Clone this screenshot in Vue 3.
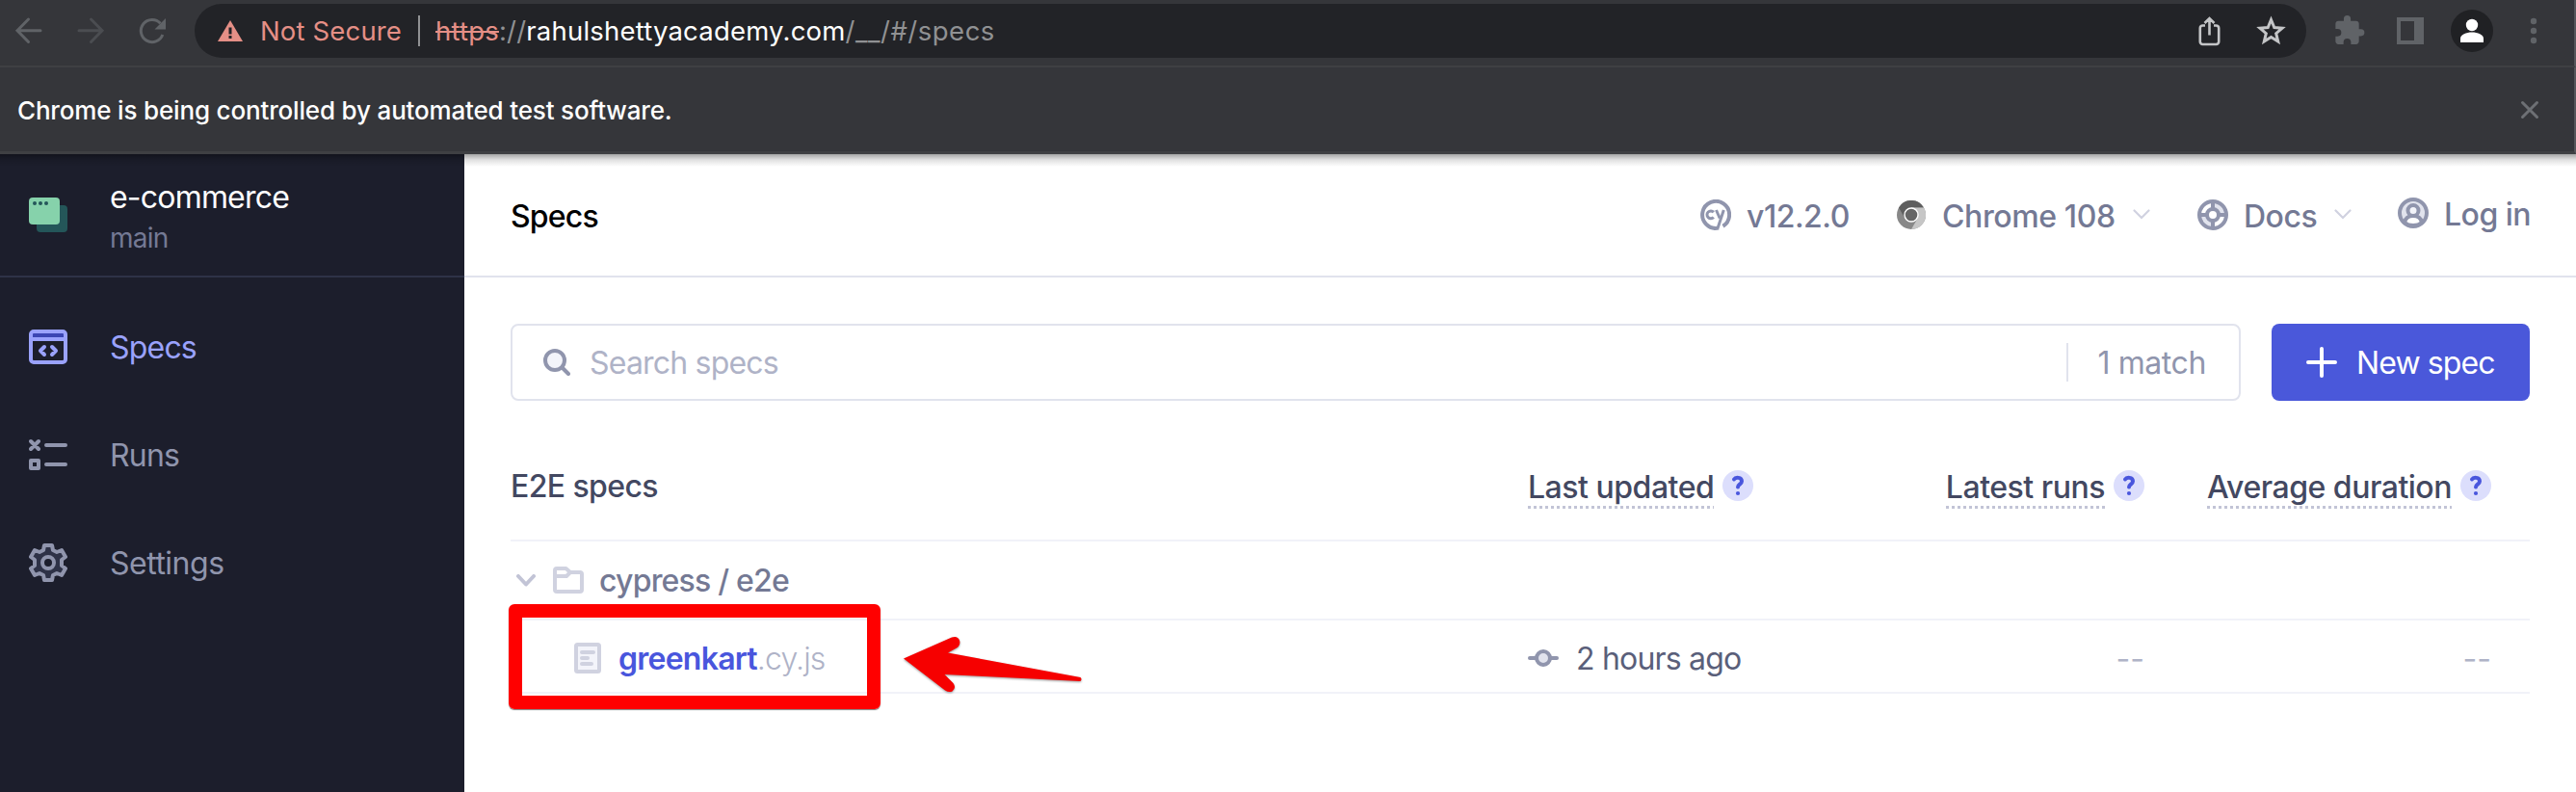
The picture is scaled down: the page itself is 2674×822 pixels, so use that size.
<script setup>
const nav = [
  { id: 'specs', label: 'Specs' },
  { id: 'runs', label: 'Runs' },
  { id: 'settings', label: 'Settings' },
]
const columns = [
  { label: 'Last updated', cls: 'updated' },
  { label: 'Latest runs', cls: 'end' },
  { label: 'Average duration', cls: 'end' },
]
</script>

<template>
  <div class="window">
    <div class="toolbar">
      <svg class="nav-icons" width="202" height="68" viewBox="0 0 202 68" fill="none" stroke="#606367" stroke-width="3">
        <path d="M42 31.7H18.5M29.5 20 18 31.7 29.5 43.5" stroke-linecap="round" />
        <path d="M82 31.7h23.5M94.500 20 106 31.700 94.500 43.500" stroke="#4b4d51" stroke-linecap="round" />
        <path d="M168.800 36A11.600 11.600 0 1 1 166.500 24.200" />
        <path d="M172 19v11.500h-11.500z" fill="#606367" stroke="none" />
      </svg>
      <div class="omnibox">
        <svg class="warn" width="26" height="22" viewBox="0 0 26 22"><path d="M13 0 26 22H0z" fill="#e58f86" /><path d="M11.500 7.500h3v7h-3zM11.500 16h3v3h-3z" fill="#222327" /></svg>
        <span class="not-secure">Not Secure</span>
        <i class="divider"></i>
        <span class="url"><s>https</s><span class="scheme">://</span><b>rahulshettyacademy.com</b><span class="path">/__/#/specs</span></span>
        <svg class="omni-icons" width="92" height="34" viewBox="0 0 92 34" fill="none" stroke="#c4c5c7" stroke-width="2.600">
          <path d="M8 11.500H5.500A2.700 2.700 0 0 0 2.800 14.200v14A2.700 2.700 0 0 0 5.500 31h14a2.700 2.700 0 0 0 2.700-2.800v-14a2.700 2.700 0 0 0-2.700-2.700H17M12.500 21.500V4.500M7.500 9l5-5 5 5" />
          <path d="M76.500 5.500l3.300 8 8.300.7-6.400 5.500 2 8.300-7.200-4.500-7.200 4.500 2-8.300-6.400-5.500 8.300-.7z" stroke-width="3" />
        </svg>
      </div>
      <svg class="ext-icons" width="278" height="68" viewBox="2394 0 278 68">
        <path transform="translate(2421.500 14.500) scale(1.430)" fill="#606367" d="M20.500 11H19V7c0-1.100-.9-2-2-2h-4V3.500a2.500 2.500 0 0 0-5 0V5H4c-1.100 0-1.990.9-1.990 2v3.800H3.500a2.700 2.700 0 0 1 0 5.400H2V20c0 1.100.9 2 2 2h3.800v-1.500a2.700 2.700 0 0 1 5.400 0V22H17c1.100 0 2-.9 2-2v-4h1.500a2.500 2.500 0 0 0 0-5z" />
        <path d="M2488 18h28v28h-28zM2492 22v20h14V22z" fill="#606367" fill-rule="evenodd" />
        <circle cx="2566" cy="32" r="22" fill="#202124" />
        <circle cx="2566" cy="26" r="6.200" fill="#fff" />
        <path d="M2554 44v-4c0-4 6-6.500 12-6.500s12 2.500 12 6.500v4z" fill="#fff" />
        <g fill="#606367"><circle cx="2630" cy="22" r="3.200" /><circle cx="2630" cy="32" r="3.200" /><circle cx="2630" cy="42" r="3.200" /></g>
      </svg>
    </div>

    <div class="infobar">
      <span>Chrome is being controlled by automated test software.</span>
      <svg width="20" height="20" viewBox="0 0 20 20" stroke="#6d7074" stroke-width="3" stroke-linecap="round"><path d="M2.500 2.500l15 15M17.500 2.500l-15 15" /></svg>
    </div>

    <div class="app">
      <aside>
        <div class="project">
          <svg width="40" height="36" viewBox="0 0 40 36">
            <rect x="8" y="8" width="32" height="28" rx="4" fill="#245659" />
            <rect width="32" height="28" rx="4" fill="#86d2ab" />
            <g fill="#245659"><circle cx="6" cy="6" r="2" /><circle cx="12" cy="6" r="2" /><circle cx="18" cy="6" r="2" /></g>
          </svg>
          <div class="names"><span class="name">e-commerce</span><span class="branch">main</span></div>
        </div>
        <nav>
          <a v-for="n in nav" :key="n.id" :class="n.id">
            <svg v-if="n.id === 'specs'" width="40" height="40" viewBox="0 0 40 40" fill="none" stroke="#9aa2fc" stroke-width="4" stroke-linecap="round" stroke-linejoin="round">
              <rect x="4" y="6" width="32" height="5" fill="#3b46b4" stroke="none" />
              <rect x="2" y="4" width="36" height="32" rx="3" /><path d="M3 12h34" stroke-linecap="butt" />
              <path d="M16 20l-4 4 4 4M24 20l4 4-4 4" />
            </svg>
            <svg v-else-if="n.id === 'runs'" width="40" height="40" viewBox="0 0 40 40" fill="none" stroke="#9095ad" stroke-width="4" stroke-linecap="round" stroke-linejoin="round">
              <path d="M2 6l8 8M10 6l-8 8M18 10h20M18 30h20M2 26h8v8H2z" />
            </svg>
            <svg v-else width="40" height="40" viewBox="-20 -20 40 40" fill="#2e3247" stroke="#9095ad" stroke-width="4" stroke-linejoin="round">
              <path d="M-4-18H4L5-13 9-11 14-13 18-6 14-3V3L18 6 14 13 9 11 5 13 4 18H-4L-5 13-9 11-14 13-18 6-14 3V-3L-18-6-14-13-9-11-5-13Z" />
              <circle r="6" fill="#1c1e2c" />
            </svg>
            <span>{{ n.label }}</span>
          </a>
        </nav>
      </aside>

      <main>
        <header>
          <h1>Specs</h1>
          <div class="item version">
            <svg width="32" height="32" viewBox="0 0 32 32" fill="none" stroke="#9095ad">
              <path d="M19 29.600A14 14 0 1 1 23.500 27.800" stroke-width="4" />
              <path d="M13.800 13.200a3.900 3.900 0 1 0 0 5.200M16.500 11l3.700 8.500M24.300 11l-6.300 19" stroke-width="3" />
            </svg>
            <span>v12.2.0</span>
          </div>
          <div class="item browser">
            <svg width="30" height="30" viewBox="0 0 30 30">
              <circle cx="15" cy="15" r="15" fill="#888" />
              <path d="M2 7.500A15 15 0 0 1 28 7.500H15L8.500 18.800z" fill="#5e5e5e" />
              <path d="M28 7.500A15 15 0 0 1 15 30l6.500-11.200L15 7.500z" fill="#c6c6c6" />
              <circle cx="15" cy="15" r="7" fill="#666" stroke="#fff" stroke-width="1.400" />
            </svg>
            <span>Chrome 108</span>
            <svg class="caret" width="18" height="12" viewBox="0 0 18 12" fill="none" stroke="#d0d2e0" stroke-width="2.200" stroke-linecap="round"><path d="M1.500 1.500 9 9l7.500-7.500" /></svg>
          </div>
          <div class="item docs">
            <svg width="32" height="32" viewBox="0 0 32 32" fill="none" stroke="#9095ad" stroke-width="4">
              <path d="M16 2a14 14 0 0 1 14 14H16zM16 30A14 14 0 0 1 2 16h14z" fill="#e1e3ed" stroke="none" />
              <circle cx="16" cy="16" r="14" /><circle cx="16" cy="16" r="6" fill="#fff" /><path d="M16 2v8M16 22v8M2 16h8M22 16h8" />
            </svg>
            <span>Docs</span>
            <svg class="caret" width="18" height="12" viewBox="0 0 18 12" fill="none" stroke="#d0d2e0" stroke-width="2.200" stroke-linecap="round"><path d="M1.500 1.500 9 9l7.500-7.500" /></svg>
          </div>
          <div class="item login">
            <svg width="32" height="32" viewBox="0 0 32 32" fill="none" stroke="#9095ad" stroke-width="4">
              <circle cx="16" cy="16" r="14" fill="#e1e3ed" stroke="none" />
              <path d="M7 26c1-5 5-7 9-7s8 2 9 7c-5 4-13 4-18 0z" fill="#fff" />
              <circle cx="16" cy="13.500" r="5.500" fill="#f3f4fa" /><circle cx="16" cy="16" r="14" />
            </svg>
            <span>Log in</span>
          </div>
        </header>

        <div class="search-row">
          <div class="search">
            <svg width="28" height="28" viewBox="0 0 28 28" stroke="#9095ad" stroke-width="4" stroke-linecap="round"><path d="M19.500 19.500 26 26" /><circle cx="12" cy="12" r="10" fill="#f3f4fa" /></svg>
            <span class="ph">Search specs</span>
            <span class="match">1 match</span>
          </div>
          <button>
            <svg width="32" height="32" viewBox="0 0 32 32" stroke="#fff" stroke-width="4" stroke-linecap="round"><path d="M16 2v28M2 16h28" /></svg>
            <span>New spec</span>
          </button>
        </div>

        <section class="table">
          <div class="row head">
            <span class="title">E2E specs</span>
            <div v-for="c in columns" :key="c.label" class="col" :class="c.cls">
              <span class="dotted">{{ c.label }}</span>
              <svg width="32" height="32" viewBox="0 0 32 32" fill="none" stroke="#4956dd" stroke-width="4" stroke-linecap="round" stroke-linejoin="round"><circle cx="16" cy="16" r="16" fill="#dcdefc" stroke="none" /><path d="M12 9.500C13.500 7 20 7 20 11.500c0 3-4 3.300-4 6" /><circle cx="16" cy="24" r="2.100" fill="#4956dd" stroke="none" /></svg>
            </div>
          </div>
          <div class="row folder">
            <div class="cell">
              <svg width="20" height="13" viewBox="0 0 20 13" fill="none" stroke="#c2c4d6" stroke-width="4" stroke-linecap="round" stroke-linejoin="round"><path d="M2 2l8 8.500L18 2" /></svg>
              <svg class="dir" width="32" height="28" viewBox="0 0 32 28" fill="none" stroke="#d0d2e0" stroke-width="4" stroke-linejoin="round"><path d="M2 4a2 2 0 0 1 2-2h9.500l4.500 4h10a2 2 0 0 1 2 2v16a2 2 0 0 1-2 2H4a2 2 0 0 1-2-2zM2 10h12l4-4" /></svg>
              <span class="dirname">cypress / e2e</span>
            </div>
          </div>
          <div class="row file">
            <div class="cell">
              <svg width="28" height="32" viewBox="0 0 28 32" fill="none" stroke="#d0d2e0" stroke-width="4" stroke-linecap="round"><rect x="2" y="2" width="24" height="28" rx="1.500" fill="#f3f4fa" /><path d="M8 10h12M8 16h6M8 22h10" /></svg>
              <span class="filename"><b>greenkart</b><span>.cy.js</span></span>
            </div>
            <div class="time">
              <svg width="32" height="20" viewBox="0 0 32 20" stroke="#9095ad" stroke-width="4" stroke-linecap="round"><path d="M2 10h28" /><circle cx="16" cy="10" r="7" fill="#e1e3ed" /></svg>
              <span>2 hours ago</span>
            </div>
            <span class="dash">--</span>
            <span class="dash">--</span>
            <div class="callout"></div>
          </div>
        </section>
      </main>

      <svg class="arrow" width="190" height="64" viewBox="936 658 190 64">
        <path d="M938 683.500 988 661.500Q994 659.500 996 664.500 997.500 669.500 993 672.500L984 677.500 1121.500 703Q1123.500 705 1121.500 707L980.500 700 989.500 709Q993 714 988.500 717.500 985 719 981 716.500Z" fill="#f60000" />
      </svg>
    </div>
  </div>
</template>

<style>
body { margin: 0; background: #fff; }
</style>

<style scoped>
* { box-sizing: border-box; }
.window { position: relative; width: 2674px; height: 822px; overflow: hidden; font-family: Inter, "Liberation Sans", sans-serif; font-size: 32px; line-height: 40px; color: #434861; white-space: nowrap; }
svg { display: block; flex: none; }
.toolbar { display: flex; height: 70px; background: #35363a; border-bottom: 2px solid #3f4043; border-right: 2px solid #55565a; }
.omnibox { display: flex; align-items: center; width: 2192px; height: 56px; margin-top: 4px; padding: 0 21px 0 24px; border-radius: 28px; background: #222327; font-size: 27.500px; }
.not-secure { margin-left: 18px; width: 164px; color: #e58f86; letter-spacing: .15px; }
.divider { width: 2px; height: 32px; background: #909193; }
.url { margin-left: 16px; color: #909193; letter-spacing: .2px; }
.url s { color: #e58f86; text-decoration-thickness: 2px; }
.url b { font-weight: 400; color: #fff; }
.path { letter-spacing: .5px; }
.omni-icons { margin-left: auto; }
.infobar { display: flex; align-items: center; justify-content: space-between; height: 90px; padding: 0 36px 0 18px; background: #35363a; border-bottom: 3px solid #3f4043; border-right: 2px solid #55565a; color: #fff; font-size: 26px; font-weight: 500; letter-spacing: -.17px; }
.infobar span { padding-top: 2px; }
.app { position: relative; display: flex; height: 662px; }
.app::before { content: ""; position: absolute; inset: 0 0 auto; height: 13px; background: linear-gradient(rgba(0,0,0,.35), rgba(0,0,0,.12) 45%, transparent); }
aside { width: 482px; background: #1c1e2c; letter-spacing: -.8px; }
.project { display: flex; align-items: center; height: 128px; padding-left: 30px; border-bottom: 2px solid #2e3247; }
.names { display: flex; flex-direction: column; margin-left: 44px; padding-top: 3px; }
.name { color: #fff; line-height: 44px; }
.branch { color: #747994; font-size: 28px; line-height: 40px; }
nav { padding-top: 16px; }
nav a { display: flex; align-items: center; height: 112px; padding-left: 30px; color: #9095ad; }
nav a span { margin-left: 44px; padding-top: 2px; }
nav a.specs { color: #9aa2fc; }
nav a.settings { letter-spacing: -.5px; }
main { flex: 1; letter-spacing: -.8px; }
header { display: flex; align-items: center; height: 128px; border-bottom: 2px solid #e1e3ed; padding-left: 48px; }
h1 { margin: 0; padding-top: 3px; width: 1235px; font-size: 32px; font-weight: 500; color: #000; }
.item { display: flex; align-items: center; font-weight: 500; color: #747994; letter-spacing: -.5px; }
.item span { margin-left: 16px; padding-top: 3px; }
.version { width: 204px; }
.browser { width: 312px; }
.browser span { margin-left: 17px; letter-spacing: -.4px; }
.docs { width: 208px; }
.caret { margin-left: 18px; }
.login { padding-bottom: 4px; }
.search-row { display: flex; gap: 32px; padding: 48px 48px 0; }
.search { display: flex; align-items: center; width: 1796px; height: 80px; padding: 0 34px 0 32px; border: 2px solid #e1e3ed; border-radius: 8px; }
.ph { margin-left: 20px; padding-top: 2px; color: #afb3c7; }
.match { margin-left: auto; padding: 2px 0 0 30px; line-height: 38px; border-left: 2px solid #e1e3ed; color: #9095ad; letter-spacing: -.4px; }
button { display: flex; align-items: center; width: 268px; height: 80px; padding: 0 0 0 36px; border: 0; border-radius: 8px; background: #4a58da; color: #fff; font: inherit; letter-spacing: -.9px; }
button span { margin-left: 20px; padding-top: 2px; }
.table { margin: 48px 48px 0; }
.row { display: grid; grid-template-columns: 1056px 340px 300px 360px 40px; align-items: center; position: relative; border-bottom: 2px solid #f1f2f9; }
.head { height: 98px; padding-bottom: 16px; font-weight: 500; letter-spacing: -.48px; }
.title { padding-top: 2px; letter-spacing: -.6px; }
.col { display: flex; align-items: center; gap: 9px; }
.end { justify-content: flex-end; }
.dotted { padding: 5px 0 2px; background: repeating-linear-gradient(90deg, #c2c4d6 0 3px, transparent 3px 6px) bottom / 100% 3px no-repeat; }
.folder { height: 82px; }
.cell { display: flex; align-items: center; padding-left: 6px; }
.dir { margin-left: 18px; }
.dirname { margin-left: 16px; padding-top: 2px; font-weight: 500; color: #747994; }
.file { height: 76px; padding-top: 4px; }
.file .cell { padding-left: 66px; }
.filename { margin-left: 18px; padding-top: 1px; color: #afb3c7; }
.filename b { font-weight: 600; color: #4956dd; letter-spacing: -.75px; }
.filename span { font-weight: 300; letter-spacing: -.85px; }
.time { display: flex; align-items: center; color: #5a5f7a; }
.time span { margin-left: 18px; padding-top: 1px; }
.dash { padding-top: 1px; text-align: right; color: #afb3c7; letter-spacing: 0; }
.callout { position: absolute; left: -2px; top: -17px; width: 386px; height: 109px; border: 14px solid #f00; border-radius: 6px; box-shadow: 0 1px 1px rgba(0,0,0,.5); }
.arrow { position: absolute; left: 936px; top: 498px; filter: drop-shadow(0 1px 1px rgba(0,0,0,.4)); }
</style>
